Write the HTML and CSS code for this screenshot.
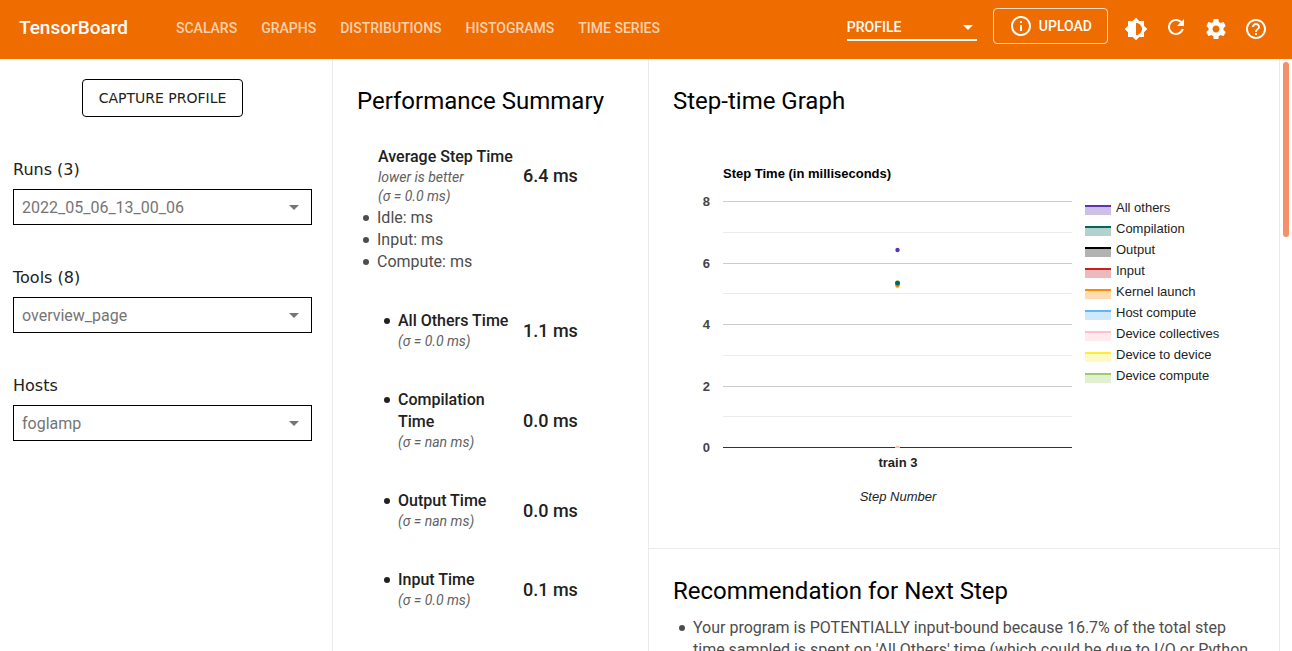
FILE: index.html
```html
<!DOCTYPE html>
<html lang="en">
<head>
<meta charset="utf-8">
<title>TensorBoard</title>
<link rel="stylesheet" href="styles.css">
</head>
<body>
<header class="topbar">
  <h1 class="brand">TensorBoard</h1>
  <nav class="tabs">
    <a href="#scalars">SCALARS</a>
    <a href="#graphs">GRAPHS</a>
    <a href="#distributions">DISTRIBUTIONS</a>
    <a href="#histograms">HISTOGRAMS</a>
    <a href="#timeseries">TIME SERIES</a>
  </nav>
  <div class="plugin">
    <select class="plugin-select" aria-label="Plugin"><option>PROFILE</option></select>
    <svg class="arrow" viewBox="0 0 10 5" aria-hidden="true"><path d="M0 0h10L5 5z"/></svg>
  </div>
  <button class="upload" type="button">
    <svg class="icon" viewBox="0 0 24 24" aria-hidden="true"><path d="M11 7h2v2h-2zm0 4h2v6h-2zm1-9C6.480 2 2 6.480 2 12s4.480 10 10 10 10-4.480 10-10S17.520 2 12 2zm0 18c-4.410 0-8-3.590-8-8s3.590-8 8-8 8 3.590 8 8-3.590 8-8 8z"/></svg>
    <span>UPLOAD</span>
  </button>
  <div class="actions">
    <button type="button" aria-label="Toggle dark mode"><svg class="icon" viewBox="0 0 24 24"><path d="M20 15.310L23.310 12 20 8.690V4h-4.690L12 .690 8.690 4H4v4.690L.690 12 4 15.310V20h4.690L12 23.310 15.310 20H20v-4.690zM12 18V6c3.310 0 6 2.690 6 6s-2.690 6-6 6z"/></svg></button>
    <button type="button" aria-label="Reload"><svg class="icon" viewBox="0 2 24 24"><path d="M17.650 6.350C16.200 4.900 14.210 4 12 4c-4.420 0-7.990 3.580-7.990 8s3.570 8 7.990 8c3.730 0 6.840-2.550 7.730-6h-2.080c-.820 2.330-3.040 4-5.650 4-3.310 0-6-2.690-6-6s2.690-6 6-6c1.660 0 3.140.690 4.220 1.780L13 11h7V4l-2.350 2.350z"/></svg></button>
    <button type="button" aria-label="Settings"><svg class="icon" viewBox="0 0 24 24"><path d="M19.430 12.980c.040-.320.070-.640.070-.980s-.030-.660-.070-.980l2.110-1.650c.190-.150.240-.420.120-.640l-2-3.460c-.120-.220-.390-.300-.610-.220l-2.490 1c-.520-.400-1.080-.730-1.690-.980l-.380-2.650C14.460 2.180 14.250 2 14 2h-4c-.250 0-.460.180-.490.420l-.380 2.650c-.610.250-1.170.590-1.690.980l-2.490-1c-.230-.090-.490 0-.610.220l-2 3.460c-.130.220-.070.490.120.640l2.110 1.650c-.040.320-.070.650-.070.980s.030.660.070.980l-2.110 1.650c-.190.150-.240.420-.120.640l2 3.460c.120.220.390.300.610.220l2.490-1c.520.400 1.080.730 1.690.980l.380 2.650c.030.240.240.420.490.420h4c.250 0 .460-.180.490-.420l.380-2.650c.610-.250 1.170-.590 1.690-.980l2.490 1c.230.090.490 0 .610-.220l2-3.460c.120-.220.070-.490-.120-.640l-2.110-1.650zM12 15.500c-1.930 0-3.500-1.570-3.500-3.500s1.570-3.500 3.500-3.500 3.500 1.570 3.500 3.500-1.570 3.500-3.500 3.500z"/></svg></button>
    <button type="button" aria-label="Help"><svg class="icon" viewBox="0 0 24 24"><path d="M11 18h2v-2h-2v2zm1-16C6.480 2 2 6.480 2 12s4.480 10 10 10 10-4.480 10-10S17.520 2 12 2zm0 18c-4.410 0-8-3.590-8-8s3.590-8 8-8 8 3.590 8 8-3.590 8-8 8zm0-14c-2.210 0-4 1.790-4 4h2c0-1.100.900-2 2-2s2 .900 2 2c0 2-3 1.750-3 5h2c0-2.250 3-2.500 3-5 0-2.210-1.790-4-4-4z"/></svg></button>
  </div>
</header>
<div class="content">
  <aside class="sidebar">
    <button class="capture" type="button">CAPTURE PROFILE</button>
    <div class="field">
      <label for="runs">Runs (3)</label>
      <div class="picker">
        <select id="runs"><option>2022_05_06_13_00_06</option></select>
        <svg class="arrow" viewBox="0 0 10 5" aria-hidden="true"><path d="M0 0h10L5 5z"/></svg>
      </div>
    </div>
    <div class="field">
      <label for="tools">Tools (8)</label>
      <div class="picker">
        <select id="tools"><option>overview_page</option></select>
        <svg class="arrow" viewBox="0 0 10 5" aria-hidden="true"><path d="M0 0h10L5 5z"/></svg>
      </div>
    </div>
    <div class="field">
      <label for="hosts">Hosts</label>
      <div class="picker">
        <select id="hosts"><option>foglamp</option></select>
        <svg class="arrow" viewBox="0 0 10 5" aria-hidden="true"><path d="M0 0h10L5 5z"/></svg>
      </div>
    </div>
  </aside>
  <section class="summary">
    <h2>Performance Summary</h2>
    <div class="metric">
      <div class="metric-name">Average Step Time<em>lower is better<br>(σ = 0.0 ms)</em></div>
      <div class="metric-value">6.4 ms</div>
    </div>
    <ul class="bullets breakdown">
      <li>Idle: ms</li>
      <li>Input: ms</li>
      <li>Compute: ms</li>
    </ul>
    <div class="metric-list">
      <div class="metric">
        <ul class="bullets metric-name"><li>All Others Time<em>(σ = 0.0 ms)</em></li></ul>
        <div class="metric-value">1.1 ms</div>
      </div>
      <div class="metric">
        <ul class="bullets metric-name"><li>Compilation Time<em>(σ = nan ms)</em></li></ul>
        <div class="metric-value">0.0 ms</div>
      </div>
      <div class="metric">
        <ul class="bullets metric-name"><li>Output Time<em>(σ = nan ms)</em></li></ul>
        <div class="metric-value">0.0 ms</div>
      </div>
      <div class="metric">
        <ul class="bullets metric-name"><li>Input Time<em>(σ = 0.0 ms)</em></li></ul>
        <div class="metric-value">0.1 ms</div>
      </div>
    </div>
  </section>
  <main class="details">
    <section class="card graph-card">
      <h2>Step-time Graph</h2>
      <div class="chart">
        <svg class="plot" width="380" height="350" viewBox="0 0 380 350" role="img" aria-label="Step time in milliseconds">
          <text class="chart-title" x="30" y="23">Step Time (in milliseconds)</text>
          <g class="minor"><path d="M30 77.500h349M30 138.500h349M30 200.500h349M30 261.500h349"/></g>
          <g class="major"><path d="M30 46.500h349M30 108.500h349M30 169.500h349M30 231.500h349"/></g>
          <path class="baseline" d="M30 292.500h349"/>
          <g class="ticks">
            <text x="17" y="51">8</text>
            <text x="17" y="113">6</text>
            <text x="17" y="174">4</text>
            <text x="17" y="236">2</text>
            <text x="17" y="297">0</text>
          </g>
          <circle cx="204.500" cy="95" r="2.200" fill="#5e35b1"/>
          <circle cx="204.500" cy="130.500" r="2.200" fill="#fb8c00"/>
          <circle cx="204.500" cy="128" r="2.500" fill="#00695c"/>
          <path d="M202 293a2.500 2.500 0 0 1 5 0z" fill="#ffc4b8"/>
          <text class="category" x="205" y="312">train 3</text>
          <text class="axis-title" x="205" y="346">Step Number</text>
        </svg>
        <ul class="legend">
          <li class="others">All others</li>
          <li class="compilation">Compilation</li>
          <li class="output">Output</li>
          <li class="input">Input</li>
          <li class="kernel">Kernel launch</li>
          <li class="host">Host compute</li>
          <li class="collectives">Device collectives</li>
          <li class="to-device">Device to device</li>
          <li class="compute">Device compute</li>
        </ul>
      </div>
    </section>
    <section class="card">
      <h2>Recommendation for Next Step</h2>
      <ul class="bullets advice">
        <li>Your program is POTENTIALLY input-bound because 16.7% of the total step time sampled is spent on 'All Others' time (which could be due to I/O or Python</li>
      </ul>
    </section>
  </main>
  <div class="scroll-track"><div class="scroll-thumb"></div></div>
</div>
</body>
</html>
```
FILE: styles.css
```css
* { box-sizing: border-box; }
body {
  margin: 0;
  height: 100vh;
  display: flex;
  flex-direction: column;
  overflow: hidden;
  background: #fff;
  color: #212121;
  font: 400 16px/22px Roboto, sans-serif;
}
h1, h2, ul { margin: 0; padding: 0; }
button, select { font: inherit; color: inherit; background: none; cursor: pointer; }
select { appearance: none; border-radius: 0; }
.icon { width: 24px; height: 24px; fill: currentColor; display: block; }
.arrow { width: 10px; height: 5px; fill: currentColor; pointer-events: none; }

.topbar {
  flex: none;
  height: 59px;
  display: flex;
  align-items: center;
  padding: 0 16px 3px 19px;
  background: #ef6c00;
  color: #fff;
  font-size: 14px;
  font-weight: 500;
}
.brand { font-size: 19px; font-weight: 500; }
.tabs { display: flex; gap: 24px; margin-left: 48px; }
.tabs a { color: rgba(255, 255, 255, 0.7); text-decoration: none; }
.plugin {
  display: grid;
  grid-template-columns: 130px;
  align-items: center;
  margin-left: auto;
}
.plugin > * { grid-area: 1 / 1; }
.plugin .arrow { justify-self: end; margin: 0 4px 2px 0; }
.plugin-select { height: 26px; padding: 0; border: 0; border-bottom: 2px solid #fff; }
.plugin-select option { color: #212121; }
.upload {
  display: flex;
  align-items: center;
  gap: 6px;
  height: 36px;
  margin: 0 8px 4px 16px;
  padding: 0 15px;
  border: 1px solid #fbdcc4;
  border-radius: 4px;
}
.actions { display: flex; margin-top: 2px; }
.actions button { width: 40px; height: 40px; padding: 8px; border: 0; }

.content { flex: 1; min-height: 0; display: flex; }
.sidebar {
  flex: none;
  width: 333px;
  display: flex;
  flex-direction: column;
  gap: 40px;
  padding: 20px 20px 20px 13px;
  border-right: 1px solid #ebebeb;
}
.capture {
  align-self: center;
  height: 38px;
  padding: 0 16px;
  border: 1px solid #000;
  border-radius: 4px;
  font: 14px "DejaVu Sans", sans-serif;
}
.field { display: flex; flex-direction: column; gap: 6px; }
.field label { font: 16px/26px "DejaVu Sans", sans-serif; }
.picker { display: grid; align-items: center; color: #757575; }
.picker > * { grid-area: 1 / 1; }
.picker select { height: 36px; padding: 2px 8px 0; border: 1px solid #000; }
.picker .arrow { justify-self: end; margin-right: 13px; }

h2 { color: #000; font-size: 24px; font-weight: 400; line-height: 32px; }
.bullets { list-style: none; padding-left: 20px; }
.bullets li::before {
  content: "";
  display: inline-block;
  width: 6px;
  height: 6px;
  margin: 0 8px 0 -14px;
  border-radius: 50%;
  background: currentColor;
  vertical-align: 2px;
}
.summary {
  flex: none;
  width: 316px;
  padding: 26px 24px;
  border-right: 1px solid #ebebeb;
  overflow: hidden;
}
.metric {
  display: grid;
  grid-template-columns: 136px auto;
  justify-content: start;
  align-items: center;
  gap: 9px;
  padding-left: 21px;
}
.summary h2 + .metric { margin-top: 29px; }
.metric-name { font-weight: 500; }
.metric-name em {
  display: block;
  color: #616161;
  font-size: 14px;
  font-weight: 400;
  line-height: 19px;
}
.metric-value { font-size: 18px; font-weight: 500; }
.breakdown, .advice { color: #4d4d4d; }
.breakdown { margin-top: 1px; }
.metric-list { display: flex; flex-direction: column; gap: 38px; margin-top: 37px; }

.details { flex: 1; min-width: 0; border-right: 1px solid #ebebeb; overflow: hidden; }
.card { padding: 26px 24px; }
.graph-card { padding-bottom: 43px; border-bottom: 1px solid #ebebeb; }
.chart {
  display: flex;
  gap: 12px;
  margin-top: 38px;
  padding-left: 20px;
  font: 13px "Liberation Sans", Arial, sans-serif;
}
.plot { flex: none; display: block; font-size: 13px; fill: #222; }
.chart-title { font-weight: bold; fill: #000; }
.minor { stroke: #ebebeb; }
.major { stroke: #ccc; }
.baseline { stroke: #333; }
.ticks { font-weight: bold; fill: #444; text-anchor: end; }
.category { font-weight: bold; text-anchor: middle; }
.axis-title { font-style: italic; text-anchor: middle; }
.legend { margin-top: 42px; list-style: none; color: #222; line-height: 21px; white-space: nowrap; }
.legend li { display: flex; align-items: center; gap: 5px; }
.legend li::before {
  content: "";
  width: 26px;
  height: 8px;
  margin-top: 5px;
  border-top: 2px solid var(--line);
  background: var(--area);
}
.others { --line: #5e35b1; --area: #cebfe7; }
.compilation { --line: #00695c; --area: #b2d2ce; }
.output { --line: #000; --area: #b2b2b2; }
.input { --line: #c5221f; --area: #ecbaba; }
.kernel { --line: #fb8c00; --area: #fedcb2; }
.host { --line: #64b5f6; --area: #d0e8fd; }
.collectives { --line: #ffc0cb; --area: #ffebee; }
.to-device { --line: #ffeb3b; --area: #fff9c4; }
.compute { --line: #9ccc65; --area: #e1f0d1; }
.advice { margin-top: 10px; }

.scroll-track { flex: none; width: 12px; padding: 3px; }
.scroll-thumb { height: 175px; border-radius: 3px; background: #f4916a; }
```
